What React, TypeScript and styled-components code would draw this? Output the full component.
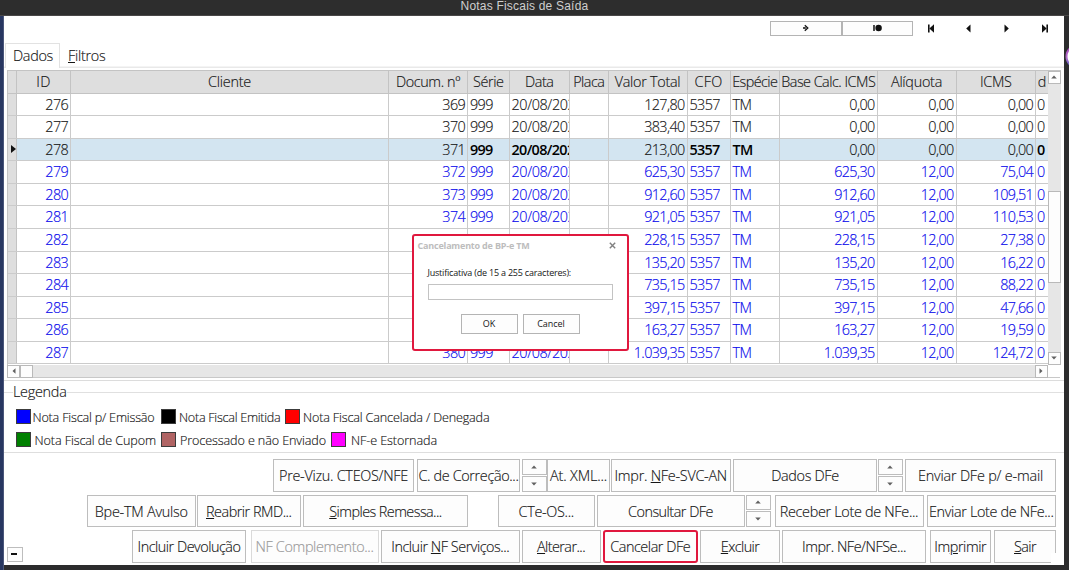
import React, { useLayoutEffect, useRef, useState } from "react";
import styled, { createGlobalStyle, css } from "styled-components";

const Global = createGlobalStyle`
  *, *::before, *::after { box-sizing: border-box; }
  html, body { margin: 0; padding: 0; overflow: hidden; background: #2d2d2d; }
  body, button, input {
    font-family: "Open Sans", "Noto Sans", sans-serif;
    font-weight: 300;
    font-size: 14.4px;
    color: #161616;
  }
`;

const Screen = styled.div`
  position: relative;
  display: flex;
  flex-direction: column;
  width: 1069px;
  height: 570px;
  overflow: hidden;
  background: #2c2c2d;
`;

const TitleBar = styled.header`
  flex: none;
  height: 16px;
  padding-right: 20px;
  border-bottom: 1px solid #494747;
  background: #2d2d2d;
  color: #cfcfcf;
  font: 400 12px/13px "Liberation Sans", Arial, sans-serif;
  letter-spacing: 0.2px;
  text-align: center;
`;

const Middle = styled.div`
  display: flex;
  height: 554px;
`;

const NavyEdge = styled.div`
  width: 4px;
  height: 554px;
  background: #283761;
  border-right: 1px solid #4a567a;
`;

const Window = styled.main`
  display: flex;
  flex-direction: column;
  width: 1060px;
  height: 549px;
  background: #fff;
  -webkit-text-stroke: 0.15px;
`;

const Toolbar = styled.div`
  display: flex;
  align-items: flex-start;
  flex: none;
  height: 26px;
  padding: 4.5px 0 0 766px;
`;

const ToolButton = styled.button`
  display: flex;
  align-items: center;
  justify-content: center;
  width: 71.5px;
  height: 15px;
  padding: 0;
  border: 1px solid #b4b4b4;
  background: #fdfdfd;
`;

const NavIcon = styled.span<{ $gap: number }>`
  display: flex;
  margin: 3px 0 0 ${(p) => p.$gap}px;
`;

const TabBar = styled.div`
  display: flex;
  align-items: flex-end;
  flex: none;
  height: 26px;
  box-shadow: inset 0 -1.5px #e9e9e9;
`;

const Tab = styled.div<{ $active?: boolean }>`
  height: 25px;
  line-height: 24px;
  ${(p) =>
    p.$active
      ? css`
          width: 55px;
          margin-left: 1px;
          padding-left: 7px;
          border: 1px solid #e2e2e2;
          border-bottom: 0;
          background: #fff;
        `
      : css`
          padding-left: 8px;
          line-height: 26px;
        `}
`;

const FitText = styled.span`
  display: inline-block;
  white-space: pre;
`;

/* Label whose tracking adapts so that it takes the given width. */
function Fit({ w, children }: { w: number; children: React.ReactNode }) {
  const ref = useRef<HTMLSpanElement>(null);
  const [tracking, setTracking] = useState(0);
  useLayoutEffect(() => {
    const el = ref.current;
    if (!el) return;
    const count = el.textContent?.length || 1;
    const natural = el.getBoundingClientRect().width - tracking * count;
    setTracking((w - natural) / count);
  }, [w]);
  return <FitText ref={ref} style={{ letterSpacing: `${tracking}px` }}>{children}</FitText>;
}

const GridArea = styled.section`
  display: flex;
  flex: none;
  width: 1053.5px;
  height: 294.5px;
  margin: 2px 0 0 3px;
  border-top: 1px solid #c3c3c3;
  border-left: 1px solid #c3c3c3;
`;

const Table = styled.div`
  display: flex;
  flex-direction: column;
  width: 1040px;
`;

const columns = "9px 54px 318px 79px 41.5px 60.5px 38.5px 79px 43px 49.5px 97.5px 79px 79.5px 1fr";

const HeadRow = styled.div`
  display: grid;
  grid-template-columns: ${columns};
  flex: none;
  height: 22.5px;
  background: #dedede;
  border-bottom: 1px solid #c3c3c3;
`;

const HeadCell = styled.div`
  display: flex;
  justify-content: center;
  min-width: 0;
  border-right: 1px solid #c3c3c3;
  line-height: 22px;
  white-space: nowrap;
  &:last-child { border-right: 0; }
`;

const Row = styled.div<{ $tone: "dark" | "blue"; $selected?: boolean }>`
  display: grid;
  grid-template-columns: ${columns};
  flex: 1;
  min-height: 0;
  border-bottom: 1px solid #cbcbcb;
  color: ${(p) => (p.$tone === "blue" ? "#0a0aec" : "#161616")};
  background: ${(p) => (p.$selected ? "#d3e5f1" : "#fff")};
`;

const Marker = styled.div`
  display: flex;
  align-items: center;
  justify-content: flex-end;
  border-right: 1px solid #c3c3c3;
  background: #dedede;
`;

const Cell = styled.div<{ $right?: boolean; $bold?: boolean; $date?: boolean }>`
  min-width: 0;
  overflow: hidden;
  padding: 0 ${(p) => (p.$date ? 0 : 1.8)}px 0 2px;
  border-right: 1px solid #cbcbcb;
  line-height: 22.6px;
  letter-spacing: ${(p) => (p.$date ? -0.38 : -0.6)}px;
  white-space: nowrap;
  text-align: ${(p) => (p.$right ? "right" : "left")};
  ${(p) => p.$bold && css`font-weight: 600; letter-spacing: ${p.$date ? -0.65 : -0.75}px; color: #000; -webkit-text-stroke: 0;`}
  &:last-child { border-right: 0; padding-left: 1px; }
`;

const VScroll = styled.div`
  display: flex;
  flex-direction: column;
  flex: 1;
  background: #e6e6e6;
`;

const HScroll = styled.div`
  display: flex;
  flex: none;
  width: 1053px;
  height: 13.5px;
  margin-left: 3px;
  background: #e6e6e6;
  border-bottom: 1px solid #c8c8c8;
`;

const ScrollPart = styled.div<{ $w: number; $h: number }>`
  display: flex;
  align-items: center;
  justify-content: center;
  flex: none;
  width: ${(p) => p.$w}px;
  height: ${(p) => p.$h}px;
  border: 1px solid #b9b9b9;
  background: #fdfdfd;
`;

const Spacer = styled.div<{ $size?: number }>`
  flex: ${(p) => (p.$size ? `0 0 ${p.$size}px` : "1")};
`;

const Corner = styled.div`
  width: 12.5px;
  background: #fff;
`;

const GridFoot = styled.div`
  flex: none;
  height: 3px;
  border-bottom: 1.5px solid #dcdcdc;
`;

const Legend = styled.section`
  flex: none;
  height: 71.5px;
  border-bottom: 1px solid #dedede;
`;

const LegendTitle = styled.div`
  display: flex;
  align-items: center;
  height: 22px;
  line-height: 22px;
  &::before { content: ""; width: 9px; height: 1px; background: #e0e0e0; }
  &::after { content: ""; flex: 1; height: 1px; background: #e0e0e0; }
`;

const LegendRow = styled.div<{ $top: number }>`
  display: flex;
  align-items: center;
  height: 15px;
  margin-top: ${(p) => p.$top}px;
  padding-left: 12px;
  font-size: 12.6px;
`;

const Swatch = styled.span<{ $color: string }>`
  width: 15px;
  height: 15px;
  border: 1px solid #3c3c3c;
  background: ${(p) => p.$color};
`;

const LegendText = styled.span<{ $w: number; $pad: number }>`
  width: ${(p) => p.$w}px;
  padding: 2px 0 0 ${(p) => p.$pad}px;
  white-space: nowrap;
`;

const Actions = styled.section`
  display: flex;
  flex-direction: column;
  gap: 3px;
  padding-top: 6.5px;
`;

const ActionRow = styled.div`
  display: flex;
  height: 32.5px;
`;

const Action = styled.button<{ $w: number; $gap: number; $disabled?: boolean; $marked?: boolean }>`
  display: flex;
  flex: none;
  align-items: center;
  justify-content: center;
  width: ${(p) => p.$w}px;
  height: 32.5px;
  margin-left: ${(p) => p.$gap}px;
  padding: 1px 0 0;
  border: 1px solid ${(p) => (p.$disabled ? "#dadada" : "#bdbdbd")};
  background: #fdfdfd;
  color: ${(p) => (p.$disabled ? "#9a9a9a" : "#161616")};
  -webkit-text-stroke: 0.15px;
  ${(p) => p.$marked && css`border: 2px solid #e0183e; border-radius: 3px;`}
`;

/* The window's resize corner covers the end of the last button. */
const CornerAction = styled(Action)`
  position: relative;
  &::after {
    content: "";
    position: absolute;
    right: -1px;
    bottom: -1px;
    width: 5px;
    height: 10px;
    background: #fff;
  }
`;

const Spin = styled.div<{ $gap: number }>`
  display: flex;
  flex: none;
  flex-direction: column;
  gap: 1px;
  width: 24.5px;
  height: 32.5px;
  margin-left: ${(p) => p.$gap}px;
`;

const SpinHalf = styled.button`
  display: flex;
  flex: 1;
  align-items: center;
  justify-content: center;
  padding: 0;
  border: 1px solid #bdbdbd;
  background: #fdfdfd;
`;

const Collapse = styled.button`
  align-self: flex-end;
  display: flex;
  align-items: center;
  justify-content: center;
  width: 15.5px;
  height: 15px;
  margin: 0 0 0.5px 3px;
  padding: 0 1px 1px 0;
  border: 1px solid #bdbdbd;
  background: #fdfdfd;
  &::before { content: ""; width: 6px; height: 2px; background: #111; }
`;

const Dialog = styled.div`
  position: absolute;
  left: 411.5px;
  top: 234px;
  width: 217px;
  height: 117px;
  border: 2px solid #e0183e;
  border-radius: 3px;
  background: #fff;
  font-size: 9px;
  font-weight: 400;
`;

const DialogHead = styled.div`
  display: flex;
  align-items: center;
  justify-content: space-between;
  height: 19px;
  padding: 0 10.5px 0 4px;
  color: #bdbdbd;
  font-weight: 700;
`;

const DialogBody = styled.div`
  display: flex;
  flex-direction: column;
  align-items: flex-start;
  padding: 11px 14px 0;
`;

const DialogField = styled.input`
  width: 185px;
  height: 16px;
  margin-top: 4.5px;
  padding: 0 2px;
  border: 1px solid #c3c3c3;
  background: #fff;
`;

const DialogButtons = styled.div`
  display: flex;
  align-self: stretch;
  justify-content: center;
  gap: 5px;
  margin-top: 14px;
`;

const DialogButton = styled.button`
  width: 57px;
  height: 20px;
  padding: 0 0 1px;
  border: 1px solid #b4b4b4;
  background: #fdfdfd;
  font-size: 9px;
  font-weight: 400;
`;

const EdgeBadge = styled.div`
  position: absolute;
  left: 1064px;
  top: 44px;
  width: 5px;
  height: 25px;
  overflow: hidden;
`;

const Tri = ({ dir }: { dir: "up" | "down" | "left" | "right" }) => {
  const d = {
    up: "M0.2 4.5L3 1.5L5.8 4.5Z",
    down: "M0.2 1.5L3 4.5L5.8 1.5Z",
    left: "M4.5 0.2L1.5 3L4.5 5.8Z",
    right: "M1.5 0.2L4.5 3L1.5 5.8Z",
  }[dir];
  return <svg width="6" height="6" viewBox="0 0 6 6"><path d={d} fill="#606060" /></svg>;
};

const heads: [string, number][] = [
  ["", 0], ["ID", 14.5], ["Cliente", 43], ["Docum. nº", 64], ["Série", 30.5], ["Data", 28.5], ["Placa", 31],
  ["Valor Total", 65.5], ["CFO", 28], ["Espécie", 45], ["Base Calc. ICMS", 94], ["Alíquota", 51], ["ICMS", 31.5], ["d", 8.5],
];

const rows = [
  [276, 369, "127,80", "0,00", "0,00", "0,00"],
  [277, 370, "383,40", "0,00", "0,00", "0,00"],
  [278, 371, "213,00", "0,00", "0,00", "0,00"],
  [279, 372, "625,30", "625,30", "12,00", "75,04"],
  [280, 373, "912,60", "912,60", "12,00", "109,51"],
  [281, 374, "921,05", "921,05", "12,00", "110,53"],
  [282, 375, "228,15", "228,15", "12,00", "27,38"],
  [283, 376, "135,20", "135,20", "12,00", "16,22"],
  [284, 377, "735,15", "735,15", "12,00", "88,22"],
  [285, 378, "397,15", "397,15", "12,00", "47,66"],
  [286, 379, "163,27", "163,27", "12,00", "19,59"],
  [287, 380, "1.039,35", "1.039,35", "12,00", "124,72"],
];

export default function App() {
  return (
    <Screen>
      <Global />
      <TitleBar>Notas Fiscais de Saída</TitleBar>
      <Middle>
        <NavyEdge />
        <Window>
          <Toolbar>
            <ToolButton>
              <svg width="8" height="8" viewBox="0 0 8 8"><path d="M1 4H3M2.8 1.2L5.8 4L2.8 6.8" fill="none" stroke="#111" strokeWidth="1.3" /><path d="M2.8 2.8L4.2 4L2.8 5.2Z" fill="#111" /></svg>
            </ToolButton>
            <ToolButton>
              <svg width="9" height="8" viewBox="0 0 9 8"><path d="M1 1V7" stroke="#111" strokeWidth="1.5" /><circle cx="5.6" cy="4" r="3.2" fill="#111" /></svg>
            </ToolButton>
            <NavIcon $gap={15}>
              <svg width="6" height="9" viewBox="0 0 6 9"><path d="M0.8 0.5V8.5" stroke="#111" strokeWidth="1.6" /><path d="M6 0.3V8.7L1.4 4.5Z" fill="#111" /></svg>
            </NavIcon>
            <NavIcon $gap={32}>
              <svg width="5" height="9" viewBox="0 0 5 9"><path d="M4.5 0.6V8.4L0.2 4.5Z" fill="#111" /></svg>
            </NavIcon>
            <NavIcon $gap={33}>
              <svg width="5" height="9" viewBox="0 0 5 9"><path d="M0.5 0.6V8.4L4.8 4.5Z" fill="#111" /></svg>
            </NavIcon>
            <NavIcon $gap={32.5}>
              <svg width="6" height="9" viewBox="0 0 6 9"><path d="M5.2 0.5V8.5" stroke="#111" strokeWidth="1.6" /><path d="M0 0.3V8.7L4.6 4.5Z" fill="#111" /></svg>
            </NavIcon>
          </Toolbar>
          <TabBar>
            <Tab $active><Fit w={40}>Dados</Fit></Tab>
            <Tab><Fit w={37.5}><u>F</u>iltros</Fit></Tab>
          </TabBar>
          <GridArea>
            <Table>
              <HeadRow>
                {heads.map(([t, w], i) => <HeadCell key={i}>{t && <Fit w={w}>{t}</Fit>}</HeadCell>)}
              </HeadRow>
              {rows.map(([id, doc, total, base, rate, icms], i) => {
                const sel = i === 2;
                return (
                  <Row key={id} $tone={i < 3 ? "dark" : "blue"} $selected={sel}>
                    <Marker>{sel && <svg width="5" height="8" viewBox="0 0 5 8"><path d="M0 0L5 4L0 8Z" fill="#111" /></svg>}</Marker>
                    <Cell $right>{id}</Cell>
                    <Cell />
                    <Cell $right>{doc}</Cell>
                    <Cell $bold={sel}>999</Cell>
                    <Cell $bold={sel} $date>20/08/202</Cell>
                    <Cell />
                    <Cell $right>{total}</Cell>
                    <Cell $bold={sel}>5357</Cell>
                    <Cell $bold={sel}>TM</Cell>
                    <Cell $right>{base}</Cell>
                    <Cell $right>{rate}</Cell>
                    <Cell $right>{icms}</Cell>
                    <Cell $bold={sel}>0</Cell>
                  </Row>
                );
              })}
            </Table>
            <VScroll>
              <ScrollPart $w={12.5} $h={12.5}><Tri dir="up" /></ScrollPart>
              <Spacer $size={107} />
              <ScrollPart $w={12.5} $h={92} />
              <Spacer />
              <ScrollPart $w={12.5} $h={12.5}><Tri dir="down" /></ScrollPart>
            </VScroll>
          </GridArea>
          <HScroll>
            <ScrollPart $w={13} $h={13}><Tri dir="left" /></ScrollPart>
            <ScrollPart $w={13} $h={13} />
            <Spacer />
            <ScrollPart $w={13} $h={13}><Tri dir="right" /></ScrollPart>
            <Corner />
          </HScroll>
          <GridFoot />
          <Legend>
            <LegendTitle><Fit w={53.5}>Legenda</Fit></LegendTitle>
            <LegendRow $top={6}>
              <Swatch $color="#0000ff" /><LegendText $w={130} $pad={1.5}><Fit w={122}>Nota Fiscal p/ Emissão</Fit></LegendText>
              <Swatch $color="#000" /><LegendText $w={109} $pad={3}><Fit w={101.5}>Nota Fiscal Emitida</Fit></LegendText>
              <Swatch $color="#ff0000" /><LegendText $w={200} $pad={3}><Fit w={186.5}>Nota Fiscal Cancelada / Denegada</Fit></LegendText>
            </LegendRow>
            <LegendRow $top={8}>
              <Swatch $color="#008000" /><LegendText $w={130} $pad={3.5}><Fit w={121.5}>Nota Fiscal de Cupom</Fit></LegendText>
              <Swatch $color="#b06464" /><LegendText $w={155} $pad={4}><Fit w={146}>Processado e não Enviado</Fit></LegendText>
              <Swatch $color="#ff00ff" /><LegendText $w={110} $pad={5}><Fit w={86}>NF-e Estornada</Fit></LegendText>
            </LegendRow>
          </Legend>
          <Actions>
            <ActionRow>
              <Action $gap={269} $w={141}><Fit w={129}>Pre-Vizu. CTEOS/NFE</Fit></Action>
              <Action $gap={3} $w={103}><Fit w={100}>C. de Correção...</Fit></Action>
              <Spin $gap={2}><SpinHalf><Tri dir="up" /></SpinHalf><SpinHalf><Tri dir="down" /></SpinHalf></Spin>
              <Action $gap={0.5} $w={63}><Fit w={57}>At. XML...</Fit></Action>
              <Action $gap={1} $w={119.5}><Fit w={112.5}>Impr. <u>N</u>Fe-SVC-AN</Fit></Action>
              <Action $gap={2.5} $w={144}><Fit w={67.5}>Dados DFe</Fit></Action>
              <Spin $gap={1}><SpinHalf><Tri dir="up" /></SpinHalf><SpinHalf><Tri dir="down" /></SpinHalf></Spin>
              <Action $gap={2.5} $w={151}><Fit w={125}>Enviar DFe p/ e-mail</Fit></Action>
            </ActionRow>
            <ActionRow>
              <Action $gap={83} $w={108.5}><Fit w={93}>Bpe-TM Avulso</Fit></Action>
              <Action $gap={1.5} $w={103.5}><Fit w={85.5}><u>R</u>eabrir RMD...</Fit></Action>
              <Action $gap={2.5} $w={165}><Fit w={112.5}><u>S</u>imples Remessa...</Fit></Action>
              <Action $gap={30} $w={96.5}><Fit w={55.5}>CTe-OS...</Fit></Action>
              <Action $gap={2} $w={148}><Fit w={85}>Consultar DFe</Fit></Action>
              <Spin $gap={1.5}><SpinHalf><Tri dir="up" /></SpinHalf><SpinHalf><Tri dir="down" /></SpinHalf></Spin>
              <Action $gap={4} $w={149}><Fit w={138.5}>Receber Lote de NFe...</Fit></Action>
              <Action $gap={3} $w={129.5}><Fit w={124.5}>Enviar Lote de NFe...</Fit></Action>
            </ActionRow>
            <ActionRow>
              <Collapse />
              <Action $gap={109.5} $w={114}><Fit w={103}>Incluir Devolução</Fit></Action>
              <Action $gap={4.5} $w={128} $disabled><Fit w={118}>NF Complemento...</Fit></Action>
              <Action $gap={2.5} $w={138.5}><Fit w={118}>Incluir <u>N</u>F Serviços...</Fit></Action>
              <Action $gap={2} $w={79}><Fit w={48}><u>A</u>lterar...</Fit></Action>
              <Action $gap={2.5} $w={94.5} $marked><Fit w={80}>Cancelar DFe</Fit></Action>
              <Action $gap={2.5} $w={80}><Fit w={38.5}><u>E</u>xcluir</Fit></Action>
              <Action $gap={2} $w={144}><Fit w={104}>Impr. NFe/NFSe...</Fit></Action>
              <Action $gap={3.5} $w={61.5}><Fit w={52}>Im<u>p</u>rimir</Fit></Action>
              <CornerAction $gap={3} $w={62}><Fit w={22}><u>S</u>air</Fit></CornerAction>
            </ActionRow>
          </Actions>
        </Window>
      </Middle>
      <EdgeBadge>
        <svg width="25" height="25" viewBox="0 0 25 25">
          <defs><linearGradient id="ring" x1="0" y1="0" x2="0" y2="1"><stop offset="0" stopColor="#a33fb4" /><stop offset="0.55" stopColor="#b06cc8" /><stop offset="1" stopColor="#4a63c8" /></linearGradient></defs>
          <circle cx="14" cy="12.5" r="11.5" fill="#fff" stroke="url(#ring)" strokeWidth="2" />
        </svg>
      </EdgeBadge>
      <Dialog>
        <DialogHead>
          <Fit w={112}>Cancelamento de BP-e TM</Fit>
          <svg width="7" height="7" viewBox="0 0 7 7"><path d="M0.8 0.8L6.2 6.2M6.2 0.8L0.8 6.2" stroke="#808080" strokeWidth="1.4" /></svg>
        </DialogHead>
        <DialogBody>
          <Fit w={143.5}>Justificativa (de 15 a 255 caracteres):</Fit>
          <DialogField />
          <DialogButtons>
            <DialogButton><Fit w={12.5}>OK</Fit></DialogButton>
            <DialogButton><Fit w={27.5}>Cancel</Fit></DialogButton>
          </DialogButtons>
        </DialogBody>
      </Dialog>
    </Screen>
  );
}
